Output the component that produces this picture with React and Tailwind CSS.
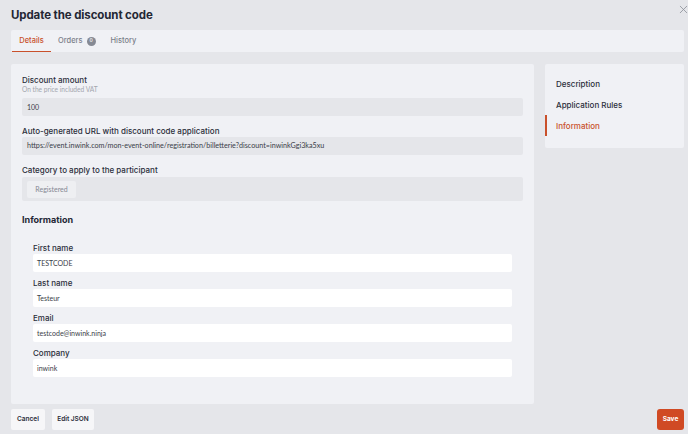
import { X } from 'lucide-react';

// Discount code edit modal
const Label = ({ children, className = '' }) => (
  <div className={`h-[11px] flex items-center text-[8px] font-medium text-[#2b2e3a] ${className}`}>{children}</div>
);

const Field = ({ label, value, first }) => (
  <div className={first ? '' : 'mt-[5px]'}>
    <Label>{label}</Label>
    <div className="mt-[1px] h-[18px] bg-white rounded-[2px] flex items-center px-[4px] text-[7px] text-[#3a3d48] font-['Lato']">
      {value}
    </div>
  </div>
);

const App = () => {
  return (
    <div className="w-[688px] h-[434px] bg-[#e5e6ea] relative overflow-hidden font-['Inter',sans-serif]">
      <X className="absolute right-[-2px] top-[3px] w-[13px] h-[13px] text-[#8d9099]" strokeWidth={1.5} />

      {/* Header */}
      <div className="pl-[11px] pt-[7px] h-[30px]">
        <h1 className="text-[11.5px] font-bold text-[#232634] leading-[16px] tracking-[-0.1px]">Update the discount code</h1>
      </div>

      {/* Tabs */}
      <div className="ml-[11px] mr-[4px] h-[22px] bg-[#f0f1f5] rounded-[2px] flex items-stretch text-[7.5px] font-medium">
        <div className="w-[39px] ml-[1px] flex items-center justify-center text-[#c9502b] border-b-[1.5px] border-[#c9502b]">Details</div>
        <div className="ml-[7px] flex items-center gap-[4px] text-[#7b7f8a]">
          Orders
          <span className="w-[9px] h-[9px] rounded-full bg-[#868a94] text-white text-[5px] flex items-center justify-center">0</span>
        </div>
        <div className="ml-[15px] flex items-center text-[#7b7f8a]">History</div>
      </div>

      {/* Body */}
      <div className="mt-[12px] pl-[11px] flex items-start gap-[11px]">
        <div className="w-[523px] h-[340px] bg-[#f0f1f5] rounded-[2px] px-[11px] pt-[10px]">
          <Label className="h-[10px]">Discount amount</Label>
          <div className="h-[8px] mt-[1px] flex items-center text-[6.6px] text-[#a3a6ae] font-['Lato']">On the price included VAT</div>
          <div className="mt-[4px] h-[18px] bg-[#e5e6ea] rounded-[2px] flex items-center px-[5px] text-[7px] text-[#3a3d48] font-['Lato']">100</div>

          <Label className="mt-[9px] h-[10px] text-[7.7px]">Auto-generated URL with discount code application</Label>
          <div className="mt-[1px] h-[18px] bg-[#e5e6ea] rounded-[2px] flex items-center px-[5px] text-[7.2px] text-[#3a3d48] font-['Lato']">
            https://event.inwink.com/mon-event-online/registration/billetterie?discount=inwinkGgi3ka5xu
          </div>

          <Label className="mt-[9px] h-[10px] text-[7.8px]">Category to apply to the participant</Label>
          <div className="mt-[2px] h-[24px] bg-[#e5e6ea] rounded-[2px] flex items-center px-[5px]">
            <span className="h-[17px] w-[49px] bg-[#eeeff2] rounded-[2px] flex items-center justify-center text-[7px] text-[#858893] font-['Lato']">Registered</span>
          </div>

          <div className="mt-[13px] h-[12px] flex items-center text-[9px] font-bold text-[#232634]">Information</div>

          <div className="mt-[16px] px-[11px]">
            <Field first label="First name" value="TESTCODE" />
            <Field label="Last name" value="Testeur" />
            <Field label="Email" value="testcode@inwink.ninja" />
            <Field label="Company" value="inwink" />
          </div>
        </div>

        {/* Side nav */}
        <div className="w-[139px] h-[84px] bg-[#f0f1f5] rounded-[2px] pt-[10px] text-[8px] font-medium">
          <div className="h-[20px] flex items-center pl-[11px] text-[#2b2e3a]">Description</div>
          <div className="h-[21px] flex items-center pl-[11px] text-[#2b2e3a]">Application Rules</div>
          <div className="h-[21px] flex items-center pl-[9px] border-l-2 border-[#c9502b] text-[#c9502b]">Information</div>
        </div>
      </div>

      {/* Footer */}
      <div className="mt-[5px] pl-[11px] pr-[4px] flex items-center text-[6.5px] font-semibold text-[#2b2e3a]">
        <button className="h-[21px] w-[34px] bg-[#f6f6f8] rounded-[2px]">Cancel</button>
        <button className="ml-[7px] h-[21px] w-[42px] bg-[#f6f6f8] rounded-[2px]">Edit JSON</button>
        <button className="ml-auto h-[21px] w-[27px] bg-[#d04a24] text-white font-bold rounded-[3px]">Save</button>
      </div>
    </div>
  );
};

export default App;
